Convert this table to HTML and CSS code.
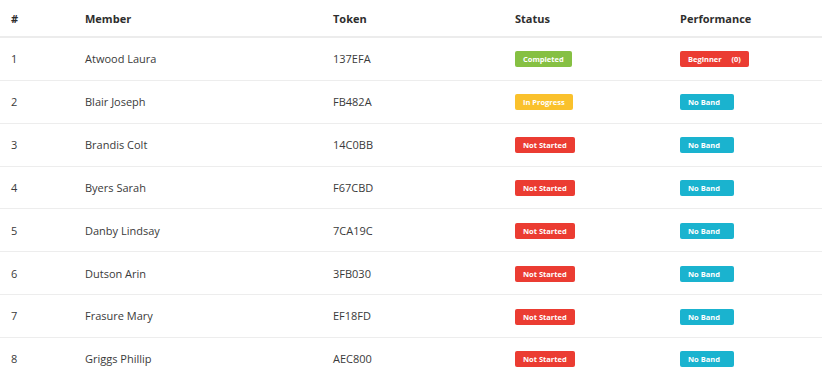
FILE: index.html
```html
<!DOCTYPE html>
<html lang="en">
<head>
    <meta charset="UTF-8">
    <title>Members</title>
    <link rel="stylesheet" href="styles.css">
</head>
<body>
    <table class="members">
        <colgroup>
            <col class="c-num">
            <col class="c-member">
            <col class="c-token">
            <col class="c-status">
            <col class="c-perf">
        </colgroup>
        <thead>
            <tr>
                <th>#</th>
                <th>Member</th>
                <th>Token</th>
                <th>Status</th>
                <th>Performance</th>
            </tr>
        </thead>
        <tbody>
            <tr>
                <td>1</td>
                <td>Atwood Laura</td>
                <td>137EFA</td>
                <td><span class="badge green">Completed</span></td>
                <td><span class="badge red">Beginner&nbsp;&nbsp;&nbsp;&nbsp;&nbsp;(0)</span></td>
            </tr>
            <tr>
                <td>2</td>
                <td>Blair Joseph</td>
                <td>FB482A</td>
                <td><span class="badge yellow">In Progress</span></td>
                <td><span class="badge cyan">No Band</span></td>
            </tr>
            <tr>
                <td>3</td>
                <td>Brandis Colt</td>
                <td>14C0BB</td>
                <td><span class="badge red">Not Started</span></td>
                <td><span class="badge cyan">No Band</span></td>
            </tr>
            <tr>
                <td>4</td>
                <td>Byers Sarah</td>
                <td>F67CBD</td>
                <td><span class="badge red">Not Started</span></td>
                <td><span class="badge cyan">No Band</span></td>
            </tr>
            <tr>
                <td>5</td>
                <td>Danby Lindsay</td>
                <td>7CA19C</td>
                <td><span class="badge red">Not Started</span></td>
                <td><span class="badge cyan">No Band</span></td>
            </tr>
            <tr>
                <td>6</td>
                <td>Dutson Arin</td>
                <td>3FB030</td>
                <td><span class="badge red">Not Started</span></td>
                <td><span class="badge cyan">No Band</span></td>
            </tr>
            <tr>
                <td>7</td>
                <td>Frasure Mary</td>
                <td>EF18FD</td>
                <td><span class="badge red">Not Started</span></td>
                <td><span class="badge cyan">No Band</span></td>
            </tr>
            <tr>
                <td>8</td>
                <td>Griggs Phillip</td>
                <td>AEC800</td>
                <td><span class="badge red">Not Started</span></td>
                <td><span class="badge cyan">No Band</span></td>
            </tr>
        </tbody>
    </table>
</body>
</html>
```

FILE: styles.css
```css
body {
    margin: 0;
    background: #fff;
    font-family: "Open Sans", "DejaVu Sans", sans-serif;
    color: #3a3a3a;
}
.members {
    width: 822px;
    border-collapse: collapse;
    table-layout: fixed;
}
.c-num { width: 74px; }
.c-member { width: 248px; }
.c-token { width: 182px; }
.c-status { width: 165px; }
.c-perf { width: 153px; }

.members th {
    height: 36px;
    padding: 0 0 0 11px;
    text-align: left;
    font-size: 11px;
    font-weight: 700;
    color: #2e2e2e;
    border-bottom: 2px solid #ececec;
}
.members td {
    height: 41.85px;
    padding: 0 0 0 11px;
    font-size: 11px;
    border-bottom: 1px solid #ededed;
}
.badge {
    display: inline-block;
    height: 16px;
    line-height: 16px;
    padding: 0 8px;
    border-radius: 2px;
    font-size: 7.5px;
    font-weight: 700;
    color: #fff;
    vertical-align: middle;
}
.badge.cyan { padding-right: 14px; }
.green { background: #86c043; }
.red { background: #eb3c32; }
.yellow { background: #fac12c; }
.cyan { background: #1ab3cf; }
```
